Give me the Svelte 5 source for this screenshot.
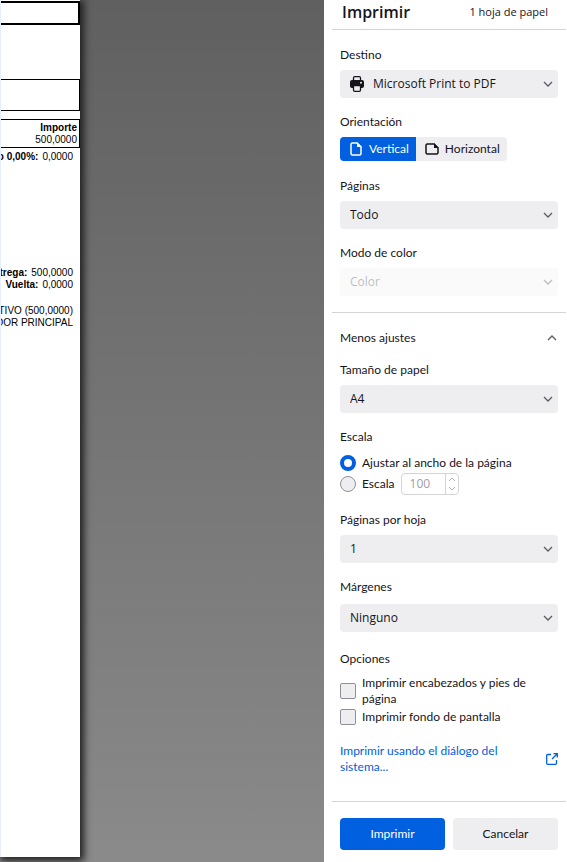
<script lang="ts">
	let destination = $state('Microsoft Print to PDF');
	let orientation = $state('vertical');
	let pages = $state('Todo');
	let colorMode = $state('Color');
	let paperSize = $state('A4');
	let scaleMode = $state('fit');
	let scale = $state('100');
	let perSheet = $state('1');
	let margins = $state('Ninguno');
	let headers = $state(false);
	let background = $state(false);
	let expanded = $state(true);
</script>

{#snippet chevron()}
	<svg class="chevron" viewBox="0 0 10 6" aria-hidden="true">
		<path d="M1 1l4 4 4-4" />
	</svg>
{/snippet}

<div class="print">
	<main class="preview">
		<div class="sheet">
			<div class="box title-box"></div>
			<div class="box client-box"></div>
			<div class="box amount-box">
				<p><b>Importe</b></p>
				<p>500,0000</p>
			</div>
			<div class="lines discount">
				<p><b>o 0,00%:</b><span>0,0000</span></p>
			</div>
			<div class="lines paid">
				<p><b>trega:</b><span>500,0000</span></p>
				<p><b>Vuelta:</b><span>0,0000</span></p>
			</div>
			<div class="lines seller">
				<p>TIVO (500,0000)</p>
				<p>DOR PRINCIPAL</p>
			</div>
		</div>
	</main>

	<form class="panel" onsubmit={(e) => e.preventDefault()}>
		<header>
			<h1>Imprimir</h1>
			<span>1 hoja de papel</span>
		</header>

		<section class="basic">
			<div class="field">
				<label for="destination">Destino</label>
				<div class="select">
					<svg class="printer" viewBox="0 0 14 16" aria-hidden="true">
						<path class="paper" d="M3.500 5V2a1.300 1.300 0 0 1 1.300-1.300h4.400A1.300 1.300 0 0 1 10.500 2v3" />
						<path
							fill-rule="evenodd"
							d="M2 4h10a2 2 0 0 1 2 2v4a2 2 0 0 1-2 2H2a2 2 0 0 1-2-2V6a2 2 0 0 1 2-2zM11 5.800a1 1 0 1 0 0 2 1 1 0 0 0 0-2z"
						/>
						<path class="paper" d="M3.500 9.500h7V14a1.300 1.300 0 0 1-1.300 1.300H4.800A1.300 1.300 0 0 1 3.500 14z" />
					</svg>
					<select id="destination" class="with-icon" bind:value={destination}>
						<option>Microsoft Print to PDF</option>
					</select>
					{@render chevron()}
				</div>
			</div>

			<fieldset class="field">
				<legend>Orientación</legend>
				<div class="segments">
					<label class:active={orientation === 'vertical'}>
						<input type="radio" name="orientation" value="vertical" bind:group={orientation} />
						<svg viewBox="0 0 14 14" aria-hidden="true">
							<path class="outline" d="M3 1h5l4 4v7l-1 1H3l-1-1V2z" />
							<path class="fold" d="M8 0l5 5H8z" />
						</svg>
						Vertical
					</label>
					<label class:active={orientation === 'horizontal'}>
						<input type="radio" name="orientation" value="horizontal" bind:group={orientation} />
						<svg viewBox="0 0 14 14" aria-hidden="true">
							<path class="outline" d="M2 2h7l4 4v5l-1 1H2l-1-1V3z" />
							<path class="fold" d="M9 1l5 5H9z" />
						</svg>
						Horizontal
					</label>
				</div>
			</fieldset>

			<div class="field">
				<label for="pages">Páginas</label>
				<div class="select">
					<select id="pages" bind:value={pages}><option>Todo</option></select>
					{@render chevron()}
				</div>
			</div>

			<div class="field">
				<label for="color-mode">Modo de color</label>
				<div class="select disabled">
					<select id="color-mode" bind:value={colorMode} disabled><option>Color</option></select>
					{@render chevron()}
				</div>
			</div>
		</section>

		<section class="more">
			<button
				type="button"
				class="toggle"
				class:expanded
				aria-expanded={expanded}
				onclick={() => (expanded = !expanded)}
			>
				Menos ajustes
				{@render chevron()}
			</button>

			{#if expanded}
				<div class="field">
					<label for="paper-size">Tamaño de papel</label>
					<div class="select">
						<select id="paper-size" bind:value={paperSize}><option>A4</option></select>
						{@render chevron()}
					</div>
				</div>

				<fieldset class="field choices">
					<legend>Escala</legend>
					<label class="choice">
						<input type="radio" name="scale" value="fit" bind:group={scaleMode} />
						Ajustar al ancho de la página
					</label>
					<div class="scale-row">
						<label class="choice">
							<input type="radio" name="scale" value="custom" bind:group={scaleMode} />
							Escala
						</label>
						<div class="spinner">
							<input type="text" aria-label="Escala" bind:value={scale} disabled={scaleMode === 'fit'} />
							<div class="arrows">
								<svg viewBox="0 0 8 5" aria-hidden="true"><path d="M1 4l3-3 3 3" /></svg>
								<svg viewBox="0 0 8 5" aria-hidden="true"><path d="M1 1l3 3 3-3" /></svg>
							</div>
						</div>
					</div>
				</fieldset>

				<div class="field">
					<label for="per-sheet">Páginas por hoja</label>
					<div class="select">
						<select id="per-sheet" bind:value={perSheet}><option>1</option></select>
						{@render chevron()}
					</div>
				</div>

				<div class="field margins">
					<label for="margins">Márgenes</label>
					<div class="select">
						<select id="margins" bind:value={margins}><option>Ninguno</option></select>
						{@render chevron()}
					</div>
				</div>

				<fieldset class="field choices options">
					<legend>Opciones</legend>
					<label class="choice">
						<input type="checkbox" bind:checked={headers} />
						Imprimir encabezados y pies de página
					</label>
					<label class="choice">
						<input type="checkbox" bind:checked={background} />
						Imprimir fondo de pantalla
					</label>
				</fieldset>

				<a class="system" href="#system-dialog">
					<span>Imprimir usando el diálogo del sistema...</span>
					<svg viewBox="0 0 12 12" aria-hidden="true">
						<path d="M5 1.500H1.700a1 1 0 0 0-1 1v7.800a1 1 0 0 0 1 1h7.800a1 1 0 0 0 1-1V7M7.500.7h3.800v3.800M11 1L6 6" />
					</svg>
				</a>
			{/if}
		</section>

		<footer>
			<button type="submit" class="primary">Imprimir</button>
			<button type="button">Cancelar</button>
		</footer>
	</form>
</div>

<style>
	:global(body) {
		margin: 0;
	}
	.print {
		--blue: #0060df;
		--control: #eeeef0;
		--line: #d4d4d6;
		--ink: #15141a;
		display: flex;
		min-height: 100vh;
		font: 12px/16px Lato, 'Open Sans', sans-serif;
		color: var(--ink);
	}
	.print * {
		box-sizing: border-box;
	}
	h1,
	p {
		margin: 0;
	}

	/* document preview */
	.preview {
		flex: 1;
		min-width: 0;
		padding-bottom: 5px;
		display: flex;
		background: linear-gradient(#606060, #8a8a8a);
		overflow: hidden;
	}
	.sheet {
		width: 80px;
		border-left: 1px solid #e6eeff;
		padding-top: 1px;
		background: #fff;
		box-shadow: 2px 2px 7px 2px #222;
		font: 10px/12px 'Liberation Sans', Arial, sans-serif;
		color: #000;
	}
	.sheet p {
		display: flex;
		justify-content: flex-end;
		gap: 4px;
		white-space: nowrap;
	}
	.box {
		border: 1px solid #000;
		border-left: 0;
	}
	.title-box {
		height: 24px;
		border-width: 2px;
	}
	.client-box {
		height: 32px;
		margin-top: 54px;
	}
	.amount-box {
		margin-top: 8px;
		padding: 2px 2px 1px 0;
	}
	.lines {
		padding-right: 7px;
		overflow: hidden;
	}
	.discount {
		margin-top: 3px;
	}
	.paid {
		margin-top: 104px;
	}
	.seller {
		margin-top: 14px;
	}

	/* settings panel */
	.panel {
		width: 243px;
		flex: none;
		display: flex;
		flex-direction: column;
		padding: 0 1px 0 8px;
		background: #fff;
	}
	header {
		display: flex;
		align-items: center;
		justify-content: space-between;
		height: 30px;
		padding: 0 18px 6px 10px;
		border-bottom: 1px solid var(--line);
		font-family: 'Open Sans', sans-serif;
		font-size: 11px;
	}
	h1 {
		font-size: 16px;
		line-height: 24px;
		font-weight: 600;
	}
	section {
		padding: 0 8px;
	}
	.basic {
		padding-top: 17px;
		border-bottom: 1px solid var(--line);
	}
	.more {
		flex: 1;
		padding-top: 17px;
	}
	.field {
		margin: 0 0 16px;
		padding: 0;
		border: 0;
		min-width: 0;
	}
	fieldset.field {
		margin-bottom: 17px;
	}
	.field > label,
	legend {
		display: block;
		padding: 0;
		margin-bottom: 7px;
	}
	.choices legend {
		margin-bottom: 8px;
	}
	.select {
		display: grid;
		align-items: center;
	}
	.select > * {
		grid-area: 1 / 1;
	}
	select {
		appearance: none;
		width: 100%;
		height: 28px;
		padding: 0 24px 0 10px;
		border: 0;
		border-radius: 4px;
		background: var(--control);
		color: inherit;
		font: 12px/16px 'Open Sans', sans-serif;
	}
	.with-icon {
		padding-left: 33px;
	}
	.chevron {
		width: 10px;
		height: 6px;
		fill: none;
		stroke: #5b5b66;
		stroke-width: 1.3;
	}
	.select .chevron {
		justify-self: end;
		margin-right: 5px;
		pointer-events: none;
		z-index: 1;
	}
	.disabled {
		opacity: 0.4;
	}
	.printer {
		width: 14px;
		height: 16px;
		margin-left: 10px;
		fill: var(--ink);
		pointer-events: none;
		z-index: 1;
	}
	.paper {
		fill: var(--control);
		stroke: var(--ink);
		stroke-width: 1.3;
	}

	.segments {
		display: inline-flex;
		vertical-align: top;
		height: 24px;
		border-radius: 4px;
		background: var(--control);
		overflow: hidden;
	}
	.segments label {
		display: flex;
		align-items: center;
		gap: 6px;
		padding: 0 7px 0 9px;
	}
	.segments .active {
		background: var(--blue);
		color: #fff;
	}
	.segments input {
		appearance: none;
		position: absolute;
		margin: 0;
	}
	.segments svg {
		width: 14px;
		height: 14px;
	}
	.outline {
		fill: none;
		stroke: currentColor;
		stroke-width: 1.5;
	}
	.fold {
		fill: currentColor;
	}

	button {
		border: 0;
		background: none;
		color: inherit;
		font: inherit;
	}
	.toggle {
		display: flex;
		align-items: center;
		justify-content: space-between;
		width: 100%;
		margin-bottom: 16px;
		padding: 0 1px 0 0;
	}
	.expanded .chevron {
		transform: rotate(180deg);
	}

	.choice {
		display: flex;
		align-items: center;
		gap: 6px;
		min-height: 20px;
	}
	.field > .choice {
		display: flex;
		margin: 0;
	}
	.choice input {
		appearance: none;
		flex: none;
		width: 16px;
		height: 16px;
		margin: 0;
		border: 1px solid #8f8f9d;
		border-radius: 2px;
		background: var(--control);
	}
	.choice input[type='radio'] {
		border-radius: 50%;
	}
	.choice input[type='radio']:checked {
		border: 4px solid var(--blue);
		background: #fff;
	}
	.choice input[type='checkbox']:checked {
		border-color: var(--blue);
		background: var(--blue);
	}
	.scale-row {
		display: flex;
		align-items: center;
		gap: 6px;
	}
	.spinner {
		display: flex;
		width: 58px;
		height: 22px;
		border: 1px solid var(--line);
		border-radius: 4px;
	}
	.spinner input {
		flex: 1;
		min-width: 0;
		padding: 0 0 0 8px;
		border: 0;
		background: none;
		color: inherit;
		font: 12px/16px 'Open Sans', sans-serif;
	}
	.spinner input:disabled {
		color: #a0a0a5;
	}
	.arrows {
		display: flex;
		flex-direction: column;
		align-items: center;
		justify-content: space-evenly;
		width: 13px;
		border-left: 1px solid var(--line);
	}
	.arrows svg {
		width: 8px;
		height: 5px;
		fill: none;
		stroke: #b0b0b5;
	}
	.margins {
		margin-bottom: 19px;
	}
	.margins label {
		margin-bottom: 9px;
	}
	fieldset.options {
		margin-bottom: 16px;
	}

	.system {
		display: flex;
		align-items: center;
		justify-content: space-between;
		gap: 24px;
		color: var(--blue);
		text-decoration: none;
	}
	.system svg {
		flex: none;
		width: 12px;
		height: 12px;
		fill: none;
		stroke: currentColor;
		stroke-width: 1.3;
	}

	footer {
		display: flex;
		gap: 8px;
		padding: 16px 8px 12px;
		border-top: 1px solid var(--line);
	}
	footer button {
		flex: 1;
		height: 32px;
		border-radius: 4px;
		background: var(--control);
	}
	footer .primary {
		background: var(--blue);
		color: #fff;
	}
</style>
